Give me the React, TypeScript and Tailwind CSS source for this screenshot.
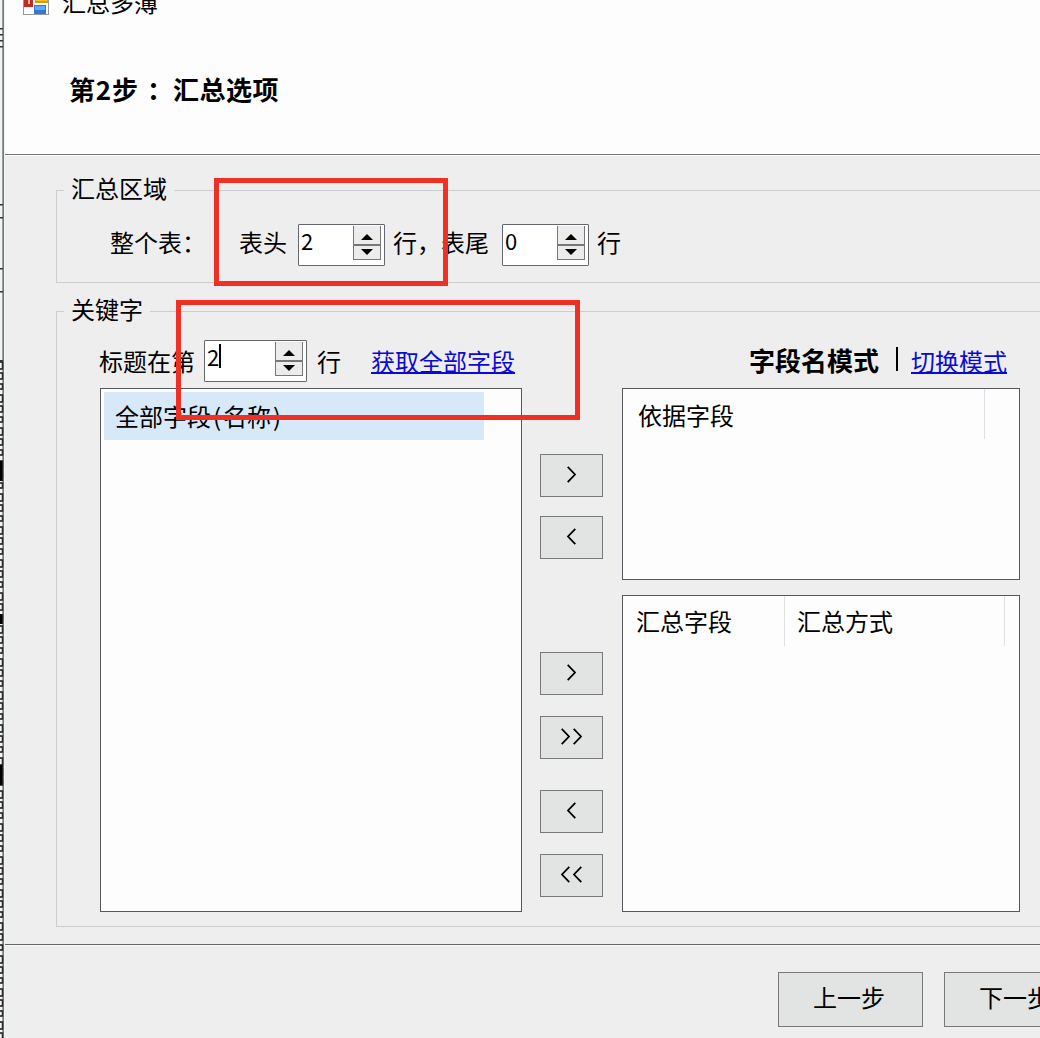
import React from "react";
import clsx from "clsx";

// rows of the sheet behind the window that stay visible at its left edge
const EDGE_ROWS = Array.from({ length: 62 }, (_, i) => 362 + i * 11);

interface SpinnerProps {
  value: string;
  className?: string;
  focused?: boolean;
}

function Spinner({ value, className, focused }: SpinnerProps) {
  return (
    <div
      className={clsx(
        "flex h-[42px] shrink-0 justify-between rounded-[1px] border border-[#64686c] bg-white pt-px pr-[3px]",
        className
      )}
    >
      <div className="flex h-7 items-center pl-[2px]">
        <span className="text-[22px] leading-7">{value}</span>
        {focused && <span className="h-6 w-[2px] bg-black" />}
      </div>
      <div className="flex h-[34px] w-7 flex-col border border-t-0 border-[#777] bg-[#ececec]">
        <button className="flex flex-1 items-center justify-center border-b-2 border-[#777] pt-1">
          <svg width="12" height="6" viewBox="0 0 12 6">
            <path d="M6 0L12 6H0z" fill="#000" />
          </svg>
        </button>
        <button className="flex flex-1 items-center justify-center">
          <svg width="12" height="6" viewBox="0 0 12 6">
            <path d="M6 6L12 0H0z" fill="#000" />
          </svg>
        </button>
      </div>
    </div>
  );
}

interface MoveButtonProps {
  dir: "left" | "right";
  double?: boolean;
  className?: string;
}

function MoveButton({ dir, double, className }: MoveButtonProps) {
  return (
    <button
      className={clsx(
        "flex h-[43px] w-[63px] items-center justify-center gap-[3px] border border-[#76787a] bg-[#e2e3e3] pb-[3px]",
        className
      )}
    >
      {(double ? [0, 1] : [0]).map((i) => (
        <svg key={i} width="9" height="17" viewBox="0 0 9 17" fill="none" stroke="#000" strokeWidth="1.8">
          <path d={dir === "right" ? "M.7 .8L8 8.5L.7 16.2" : "M8.3 .8L1 8.5L8.3 16.2"} />
        </svg>
      ))}
    </button>
  );
}

function AppIcon() {
  return (
    <svg width="26" height="26" viewBox="0 0 26 26" className="shrink-0">
      <rect x=".5" y=".5" width="25" height="25" fill="#fff" stroke="#999" />
      <rect x="1" y="3" width="9" height="15" fill="#c42a20" />
      <rect x="5" y="8" width="2" height="7" fill="#f4b9a8" />
      <rect x="12" y="3" width="13" height="11" fill="#d99a12" />
      <rect x="13" y="4" width="11" height="8" fill="#fbc62c" />
      <rect x="11" y="16" width="12" height="9" fill="#2f78d8" />
      <rect x="12" y="17" width="10" height="4" fill="#5fa8f4" />
    </svg>
  );
}

export default function App() {
  return (
    <div className="relative flex h-[1038px] w-[1040px] overflow-hidden bg-[#eeeeef] font-['Noto_Sans_CJK_SC','Noto_Sans',sans-serif] text-2xl leading-7 text-black">
      <svg width="5" height="1038" viewBox="0 0 5 1038" className="shrink-0 bg-[#f2f6f2]">
        {[28, 34, 40, 46, 204, 217, 268, 291, 360].map((y) => (
          <rect key={y} x="0" y={y} width="3" height="1.5" fill="#333" />
        ))}
        {EDGE_ROWS.map((y, i) => (
          <path key={y} d={`M0 ${y}H2.5V${y + 7 - (i % 3)}H0`} fill="none" stroke="#111" strokeWidth="1.5" />
        ))}
        <rect x="0" y="461" width="3" height="20" fill="#000" />
        <rect x="0" y="614" width="3" height="10" fill="#000" />
        <rect x="0" y="765" width="3" height="20" fill="#000" />
        <rect x="2.5" y="0" width="1.2" height="1038" fill="#444" />
      </svg>

      <div className="flex w-[1035px] shrink-0 flex-col">
        <header className="flex h-[155px] shrink-0 flex-col border-b border-[#777] bg-[#fdfdfd]">
          <div className="-mt-3 flex h-7 items-center gap-[13px] pl-[18px]">
            <AppIcon />
            <span>汇总多薄</span>
          </div>
          <h1 className="mt-[57px] flex pl-[64px] text-[26px] leading-8 font-bold">
            第<span className="w-[17px] text-center">2</span>步
            <span className="w-[35px] pl-[9px]">：</span>
            <span className="tracking-[0.5px]">汇总选项</span>
          </h1>
        </header>

        <main className="flex h-[790px] shrink-0 flex-col border-t border-b border-t-white border-b-[#666] pl-[51px]">
          <fieldset className="mt-[20px] h-[107px] w-[1000px] shrink-0 border border-[#cccdce]">
            <legend className="ml-[7px] h-7 px-[7px] leading-[23px]">汇总区域</legend>
            <div className="flex pt-5 pl-[53px] leading-[35px]">
              <span className="w-[129px]">整个表：</span>
              <span className="w-[59px]">表头</span>
              <Spinner value="2" className="w-[87px]" />
              <span className="w-[117px] pl-[8px] whitespace-nowrap">行，表尾</span>
              <Spinner value="0" className="w-[87px]" />
              <span className="pl-[8px]">行</span>
            </div>
          </fieldset>

          <fieldset className="mt-[14px] h-[630px] w-[1000px] shrink-0 border border-[#cccdce]">
            <legend className="ml-[7px] h-7 px-[7px] leading-[23px]">关键字</legend>
            <div className="flex h-[63px] pt-[15px] pl-[42px] leading-[42px]">
              <span className="w-[105px]">标题在第</span>
              <Spinner value="2" focused className="w-[103px]" />
              <span className="w-16 pl-[10px]">行</span>
              <a className="w-[378px] text-[#0a0ad8] underline decoration-2 underline-offset-[1px]">获取全部字段</a>
              <b className="text-[26px] leading-[39px]">字段名模式</b>
              <span className="mt-[7px] ml-[17px] h-6 w-[2px] bg-black" />
              <a className="ml-[13px] text-[#0a0ad8] underline decoration-2 underline-offset-[1px]">切换模式</a>
            </div>

            <div className="flex pl-[43px]">
              <div className="h-[524px] w-[422px] border border-[#55585c] bg-[#fdfdfd] p-[3px]">
                <div className="flex h-12 w-[380px] items-center bg-[#d7e9f8] pb-px pl-[11px]">
                  全部字段
                  <span className="w-3 text-center">(</span>
                  名称
                  <span className="w-3 text-center">)</span>
                </div>
              </div>

              <div className="flex w-[100px] flex-col items-start pt-[66px] pl-[18px]">
                <MoveButton dir="right" />
                <MoveButton dir="left" className="mt-[19px]" />
                <MoveButton dir="right" className="mt-[93px]" />
                <MoveButton dir="right" double className="mt-[21px]" />
                <MoveButton dir="left" className="mt-[31px]" />
                <MoveButton dir="left" double className="mt-[21px]" />
              </div>

              <div className="flex w-[398px] flex-col gap-[15px]">
                <div className="h-[192px] border border-[#55585c] bg-[#fdfdfd]">
                  <div className="flex h-[50px] w-[362px] items-center border-r border-[#dfe0e2] pl-[15px] pt-px">
                    依据字段
                  </div>
                </div>
                <div className="h-[317px] border border-[#55585c] bg-[#fdfdfd]">
                  <div className="flex h-[50px]">
                    <div className="flex w-[162px] items-center border-r border-[#dfe0e2] pl-[13px]">汇总字段</div>
                    <div className="flex w-[220px] items-center border-r border-[#dfe0e2] pl-[12px]">汇总方式</div>
                  </div>
                </div>
              </div>
            </div>
          </fieldset>
        </main>

        <footer className="flex h-[93px] shrink-0 gap-[21px] border-t border-[#fbfbfb] pt-[26px] pl-[773px]">
          <button className="h-[55px] w-[145px] shrink-0 border border-[#76787a] bg-[#e2e3e3] pr-[3px] pb-[6px]">上一步</button>
          <button className="h-[55px] w-[145px] shrink-0 border border-[#76787a] bg-[#e2e3e3] pr-[3px] pb-[6px]">下一步</button>
        </footer>
      </div>

      {/* highlight marks over the form */}
      <div className="absolute top-[178px] left-[214px] h-[108px] w-[234px] border-[5px] border-[#f03024]" />
      <div className="absolute top-[300px] left-[176px] h-[120px] w-[404px] border-[5px] border-[#f03024]" />
    </div>
  );
}
